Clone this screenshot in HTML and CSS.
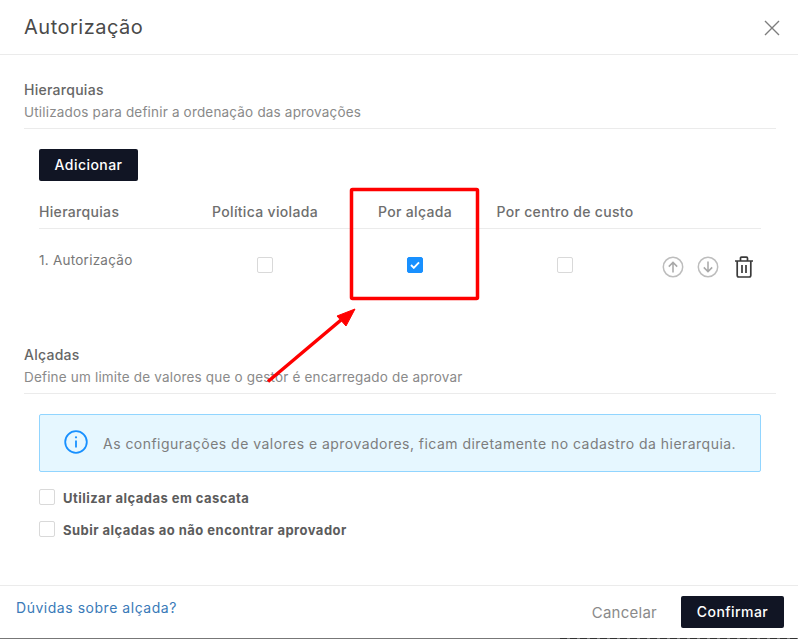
FILE: index.html
```html
<!DOCTYPE html>
<html lang="pt-BR">
<head>
<meta charset="utf-8">
<title>Autorização</title>
<link rel="stylesheet" href="styles.css">
</head>
<body>
<div class="modal">
  <header class="modal-head">
    <h1>Autorização</h1>
    <svg class="close" width="16" height="16" viewBox="0 0 16 16"><path d="M1 1l14 14M15 1L1 15" stroke="#7d7d7d" stroke-width="1.4" fill="none"/></svg>
  </header>
  <main class="modal-body">
    <section class="sec sec-h">
      <h2>Hierarquias</h2>
      <p>Utilizados para definir a ordenação das aprovações</p>
    </section>
    <div class="indent">
      <button class="btn btn-add">Adicionar</button>
      <div class="row row-head">
        <div>Hierarquias</div>
        <div class="c">Política violada</div>
        <div class="c">Por alçada</div>
        <div class="c">Por centro de custo</div>
        <div></div>
      </div>
      <div class="row row-data">
        <div class="name">1. Autorização</div>
        <div class="c"><span class="cb"></span></div>
        <div class="c"><span class="cb on"><svg width="10" height="8" viewBox="0 0 10 8"><path d="M1 4l2.8 2.8L9 1.3" stroke="#fff" stroke-width="1.9" fill="none"/></svg></span></div>
        <div class="c"><span class="cb"></span></div>
        <div class="actions">
          <svg width="22" height="22" viewBox="0 0 22 22"><circle cx="11" cy="11" r="9.7" fill="none" stroke="#bdbdbd" stroke-width="1.5"/><path d="M11 16.5V6.5M6.8 10.6L11 6.4l4.2 4.2" fill="none" stroke="#a8a8a8" stroke-width="1.5"/></svg>
          <svg width="22" height="22" viewBox="0 0 22 22"><circle cx="11" cy="11" r="9.7" fill="none" stroke="#bdbdbd" stroke-width="1.5"/><path d="M11 5.5v10M6.8 11.4l4.2 4.2 4.2-4.2" fill="none" stroke="#a8a8a8" stroke-width="1.5"/></svg>
          <svg class="trash" width="20" height="22" viewBox="0 0 20 22"><path d="M1 5h18M6.5 5V2.2q0-1 1-1h5q1 0 1 1V5M3.2 5v14.300q0 1.700 1.700 1.700h10.200q1.700 0 1.700-1.700V5" fill="none" stroke="#3a3a3a" stroke-width="1.700"/><path d="M8 9v8M12 9v8" stroke="#3a3a3a" stroke-width="1.700"/></svg>
        </div>
      </div>
    </div>
    <section class="sec sec-a">
      <h2>Alçadas</h2>
      <p>Define um limite de valores que o gestor é encarregado de aprovar</p>
    </section>
    <div class="indent">
      <div class="alert">
        <svg width="24" height="24" viewBox="0 0 24 24"><circle cx="12" cy="12" r="10.800" fill="none" stroke="#1890ff" stroke-width="1.800"/><path d="M12 10.500v7" stroke="#1890ff" stroke-width="1.800"/><circle cx="12" cy="7.300" r="1.100" fill="#1890ff"/></svg>
        <span>As configurações de valores e aprovadores, ficam diretamente no cadastro da hierarquia.</span>
      </div>
      <label class="check"><span class="cb"></span><span class="lbl">Utilizar alçadas em cascata</span></label>
      <label class="check"><span class="cb"></span><span class="lbl">Subir alçadas ao não encontrar aprovador</span></label>
    </div>
  </main>
  <footer class="modal-foot">
    <a class="help">Dúvidas sobre alçada?</a>
    <span class="cancel">Cancelar</span>
    <button class="btn btn-ok">Confirmar</button>
  </footer>
</div>
<div class="edge"></div>
<svg class="annot" width="798" height="639" viewBox="0 0 798 639">
  <rect x="351.500" y="189.500" width="126" height="109" rx="1" fill="none" stroke="#f00" stroke-width="3.500"/>
  <path d="M268 381.500L341 320" stroke="#f00" stroke-width="3.500" fill="none"/>
  <path d="M355 309L337 316L346 326Z" fill="#f00" stroke="#f00" stroke-width="1"/>
</svg>
</body>
</html>
```
FILE: styles.css
```css
* { box-sizing: border-box; }
html, body { margin: 0; height: 100%; background: #fff; overflow: hidden; }
body { font-family: "Inter", "Liberation Sans", sans-serif; color: #595959; position: relative; }
.modal { width: 798px; height: 638px; display: flex; flex-direction: column; }
.modal-head { height: 55px; flex: none; border-bottom: 1px solid #ebebeb; display: flex; align-items: center; justify-content: space-between; padding: 0 18px 0 24px; }
h1 { margin: 0; font-size: 20px; font-weight: 400; color: #4a4a4a; letter-spacing: .5px; }
.close { display: block; margin-top: 2px; }
.modal-body { flex: 1; }
.sec { margin: 0 22px 0 24px; border-bottom: 1px solid #ebebeb; }
.sec-h { padding-top: 26px; height: 74px; }
.sec-a { height: 48px; }
h2 { margin: 0; font-size: 14px; line-height: 18px; font-weight: 500; color: #666; letter-spacing: .27px; }
.sec p { margin: 4px 0 0; font-size: 13.5px; line-height: 18px; color: #8a8a8a; letter-spacing: .18px; white-space: nowrap; }
.indent { margin: 0 37px 0 39px; }
.btn { border: 0; border-radius: 2px; background: #111524; color: #fff; font: 500 14px/20px "Inter", "Liberation Sans", sans-serif; letter-spacing: .45px; padding: 0; height: 32px; display: block; }
.btn-add { width: 99px; margin-top: 20px; }
.row { display: grid; grid-template-columns: 151px 150px 150px 150px 121px; }
.row-head { height: 48px; border-bottom: 1px solid #ebebeb; align-items: center; font-size: 14px; font-weight: 500; color: #6e6e6e; padding-top: 13px; letter-spacing: .32px; }
.row-data { height: 117px; align-items: start; font-size: 13.5px; color: #777; letter-spacing: .25px; }
.row-data .name { padding-top: 22px; line-height: 18px; }
.c { text-align: center; }
.row-data .c { padding-top: 28px; }
.cb { display: inline-flex; width: 16px; height: 16px; border: 1px solid #d9d9d9; border-radius: 2px; background: #fff; align-items: center; justify-content: center; vertical-align: top; flex: none; }
.cb.on { background: #1890ff; border-color: #1890ff; }
.actions { display: flex; padding: 27px 0 0 22px; gap: 13px; }
.actions svg { flex: none; display: block; }
.actions .trash { margin-left: 2px; }
.alert { margin-top: 20px; height: 58px; border: 1px solid #91d5ff; border-radius: 2px; background: #e6f7ff; display: flex; align-items: center; padding: 0 0 0 24px; gap: 15px; font-size: 14px; color: #7d7d7d; letter-spacing: .47px; white-space: nowrap; }
.alert svg { flex: none; margin-top: -3px; }
.check { display: flex; align-items: center; gap: 8px; font-size: 13px; font-weight: 700; color: #5c5c5c; height: 16px; letter-spacing: .47px; }
.lbl { padding-top: 2px; }
.alert + .check { margin-top: 17px; }
.check + .check { margin-top: 16px; }
.modal-foot { height: 53px; flex: none; border-top: 1px solid #ebebeb; display: flex; align-items: center; padding: 0 14px 0 16px; }
.help { color: #3a7ab8; font-size: 14px; margin-top: -9px; margin-right: auto; letter-spacing: .53px; }
.cancel { font-size: 15px; color: #8a8a8a; margin-right: 24px; letter-spacing: .25px; }
.btn-ok { width: 103px; }
.edge { height: 1px; background: repeating-linear-gradient(90deg, #333 0 7px, #777 7px 10px) right top / 238px 1px no-repeat, #777; }
.annot { position: absolute; left: 0; top: 0; pointer-events: none; }
```
